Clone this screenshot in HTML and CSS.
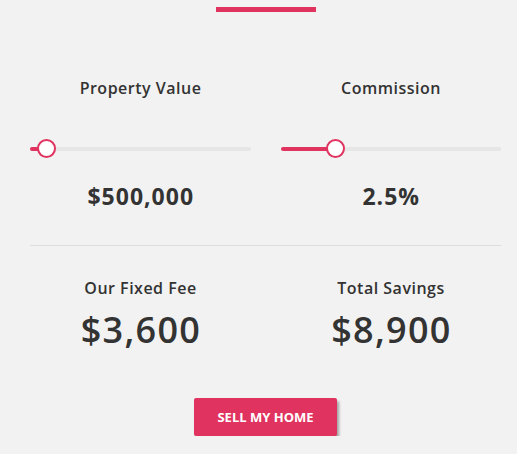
FILE: index.html
```html
<!DOCTYPE html>
<html>
<head>
<meta charset="utf-8">
<link rel="stylesheet" href="styles.css">
</head>
<body>
<div class="wrap">
  <div class="topbar"></div>
  <div class="grid">
    <div class="col">
      <div class="label">Property Value</div>
      <div class="slider">
        <div class="track"><div class="fill" style="width:17px"></div></div>
        <div class="thumb" style="left:7px"></div>
      </div>
      <div class="value">$500,000</div>
    </div>
    <div class="col">
      <div class="label">Commission</div>
      <div class="slider">
        <div class="track"><div class="fill" style="width:55px"></div></div>
        <div class="thumb" style="left:45px"></div>
      </div>
      <div class="value">2.5%</div>
    </div>
  </div>
  <div class="divider"></div>
  <div class="grid results">
    <div class="col">
      <div class="label">Our Fixed Fee</div>
      <div class="big">$3,600</div>
    </div>
    <div class="col">
      <div class="label">Total Savings</div>
      <div class="big">$8,900</div>
    </div>
  </div>
  <div class="actions">
    <button class="btn">SELL MY HOME</button>
  </div>
</div>
</body>
</html>
```
FILE: styles.css
```css
html, body {
  margin: 0;
  padding: 0;
  background: #f2f2f2;
}
body {
  font-family: "Open Sans", "Liberation Sans", sans-serif;
  color: #333333;
}
.wrap {
  padding: 7px 16px 0 30px;
}
.topbar {
  width: 100px;
  height: 5px;
  background: #e03360;
  margin: 0 auto;
}
.grid {
  display: grid;
  grid-template-columns: 1fr 1fr;
  column-gap: 30px;
}
.col {
  display: flex;
  flex-direction: column;
  align-items: stretch;
  text-align: center;
}
.label {
  font-size: 16px;
  font-weight: 600;
  line-height: 20px;
  letter-spacing: 0.5px;
  padding-left: 0.5px;
  margin-top: 66px;
}
.slider {
  position: relative;
  height: 19px;
  margin-top: 41px;
  display: flex;
  align-items: center;
}
.track {
  width: 100%;
  height: 4px;
  border-radius: 2px;
  background: #e6e6e6;
}
.fill {
  height: 100%;
  border-radius: 2px;
  background: #e03360;
}
.thumb {
  position: absolute;
  top: 0;
  width: 15px;
  height: 15px;
  border: 2px solid #e03360;
  border-radius: 50%;
  background: #ffffff;
}
.value {
  font-size: 23px;
  font-weight: 700;
  line-height: 26px;
  letter-spacing: 1px;
  padding-left: 1px;
  margin-top: 25px;
}
.divider {
  height: 1px;
  background: #dddddd;
  margin-top: 36px;
}
.results .label {
  margin-top: 32px;
}
.big {
  font-size: 36px;
  font-weight: 600;
  line-height: 40px;
  letter-spacing: 1.3px;
  padding-left: 1.3px;
  margin-top: 12px;
}
.actions {
  display: flex;
  justify-content: center;
  margin-top: 48px;
}
.btn {
  width: 143px;
  height: 38px;
  border: none;
  border-radius: 2px;
  background: #e03360;
  color: #ffffff;
  font-family: inherit;
  font-size: 13px;
  font-weight: 700;
  box-shadow: 2px 3px 3px rgba(0, 0, 0, 0.35);
  cursor: pointer;
}
```
